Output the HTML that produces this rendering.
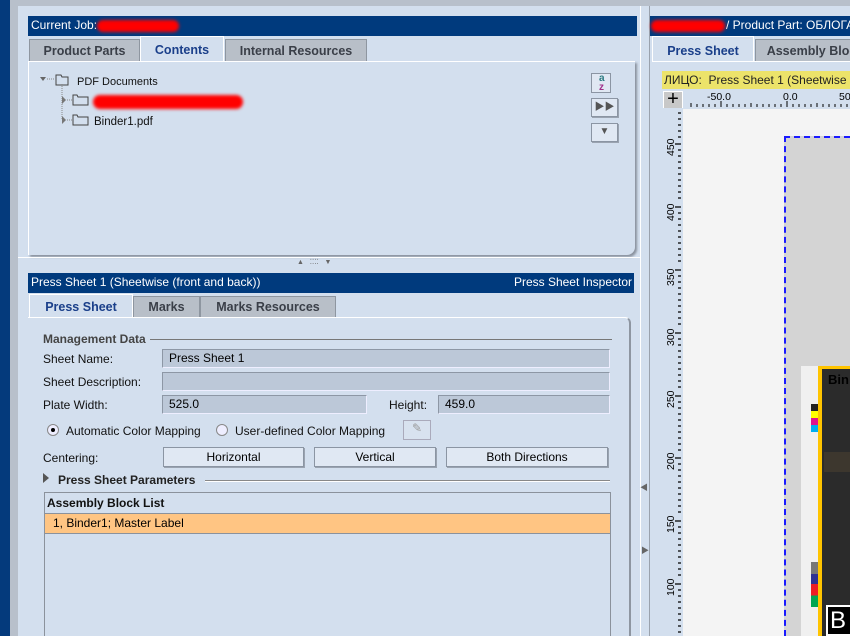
<!DOCTYPE html>
<html style="width:850px;height:636px;overflow:hidden"><head><meta charset="utf-8"><style>
*{margin:0;padding:0;box-sizing:border-box}
body{width:850px;height:636px;overflow:hidden;position:relative;background:#b8c0cb;font-family:"Liberation Sans","Noto Sans CJK SC",sans-serif;font-size:12px;color:#000}
.a{position:absolute}
.navy{background:#003a7d;color:#fff;font-size:12px;line-height:19px;padding-left:3px;white-space:nowrap;overflow:hidden}
.tab{position:absolute;height:23px;background:#b8bfc8;border:1px solid #8e96a0;border-bottom:none;font-weight:bold;color:#3a3f48;font-size:12.5px;text-align:center;line-height:22px}
.tab.on{background:#d3dfee;color:#1a3f8a;border-color:#fff}
.red{position:absolute;background:#f00;border-radius:8px;filter:blur(1.5px)}
.lbl{position:absolute;font-size:12px;color:#111}
.fld{position:absolute;height:19px;background:#bcc8d8;border:1px solid #8d97a5;border-right-color:#eef;border-bottom-color:#eef;padding-left:6px;line-height:17px;font-size:12px}
.btn{position:absolute;height:20px;background:#e0e8f3;border:1px solid #8b95a3;box-shadow:1px 1px 0 #9aa3b0;text-align:center;line-height:18px;font-size:12px}
</style></head><body>
<div class="a" style="left:0;top:0;width:10px;height:636px;background:#043a7c"></div>
<div class="a" style="left:18px;top:6px;width:622px;height:630px;background:#d3dfee"></div>
<div class="a" style="left:640px;top:6px;width:10px;height:630px;background:#d3dfee;border-left:1px solid #fff;border-right:1px solid #9aa2ad"></div>
<div class="a" style="left:650px;top:6px;width:200px;height:630px;background:#d3dfee"></div>

<div class="a navy" style="left:28px;top:16px;width:609px;height:20px">Current Job:</div>
<div class="red" style="left:97px;top:20px;width:82px;height:12px"></div>
<div class="tab" style="left:29px;top:39px;width:111px">Product Parts</div>
<div class="tab on" style="left:140px;top:36px;width:84px;height:26px;line-height:26px;border-bottom:none">Contents</div>
<div class="tab" style="left:225px;top:39px;width:142px">Internal Resources</div>
<div class="a" style="left:28px;top:61px;width:607px;height:194px;border-top:1px solid #fff;border-left:1px solid #fff;border-radius:0 0 8px 0;box-shadow:2px 2px 2px #8a929e"></div>
<svg class="a" style="left:38px;top:72px" width="120" height="60">
<path d="M2 5l6 0l-3 4z" fill="#666"/><path d="M9 7h8" stroke="#888" stroke-dasharray="1 1"/>
<path d="M18 3h5l1 2h6v8h-12z" fill="none" stroke="#444"/>
<path d="M24 12v36" stroke="#888" stroke-dasharray="1 1"/>
<path d="M24 24l4 4l-4 4z" fill="#777"/><path d="M29 28h5" stroke="#888" stroke-dasharray="1 1"/>
<path d="M35 23h4l1 2h10v8h-15z" fill="none" stroke="#444"/>
<path d="M24 44l4 4l-4 4z" fill="#777"/><path d="M29 48h5" stroke="#888" stroke-dasharray="1 1"/>
<path d="M35 43h4l1 2h10v8h-15z" fill="none" stroke="#444"/>
</svg>
<div class="lbl" style="left:77px;top:76px;font-size:11px">PDF Documents</div>
<div class="red" style="left:93px;top:95px;width:150px;height:14px"></div>
<div class="lbl" style="left:94px;top:116px;font-size:11.5px">Binder1.pdf</div>
<div class="a" style="left:591px;top:73px;width:20px;height:20px;background:#e0e8f3;border:1px solid #8b95a3;font-size:10px;font-weight:bold;color:#2a7a80;line-height:9px;padding-left:7px">a<br><span style="color:#a0308a">z</span></div>
<div class="btn" style="left:591px;top:98px;width:27px;height:19px;font-size:10px;color:#555">▶▶</div>
<div class="btn" style="left:591px;top:123px;width:27px;height:19px;font-size:10px;color:#555;line-height:16px">▼</div>
<div class="a" style="left:18px;top:257px;width:622px;border-top:1px solid #fff"></div>
<div class="a" style="left:297px;top:258px;font-size:7px;color:#666">▲ &nbsp; ⁚⁚⁚⁚ &nbsp; ▼</div>

<div class="a navy" style="left:28px;top:273px;width:606px;height:20px">Press Sheet 1 (Sheetwise (front and back))<span style="position:absolute;right:2px">Press Sheet Inspector</span></div>
<div class="tab on" style="left:29px;top:294px;width:104px;height:24px;line-height:25px">Press Sheet</div>
<div class="tab" style="left:133px;top:296px;width:67px;height:21px;line-height:20px">Marks</div>
<div class="tab" style="left:200px;top:296px;width:136px;height:21px;line-height:20px">Marks Resources</div>
<div class="a" style="left:28px;top:317px;width:603px;height:319px;border-top:1px solid #fff;border-right:2px solid #8e96a1;border-radius:0 6px 0 0"></div>
<div class="lbl" style="left:43px;top:332px;font-weight:bold;color:#444">Management Data</div>
<div class="a" style="left:150px;top:339px;width:462px;border-top:1px solid #777"></div>
<div class="lbl" style="left:43px;top:352px">Sheet Name:</div>
<div class="fld" style="left:162px;top:349px;width:448px">Press Sheet 1</div>
<div class="lbl" style="left:43px;top:375px">Sheet Description:</div>
<div class="fld" style="left:162px;top:372px;width:448px"></div>
<div class="lbl" style="left:43px;top:398px">Plate Width:</div>
<div class="fld" style="left:162px;top:395px;width:205px">525.0</div>
<div class="lbl" style="left:389px;top:398px">Height:</div>
<div class="fld" style="left:438px;top:395px;width:172px">459.0</div>
<div class="a" style="left:47px;top:424px;width:12px;height:12px;border-radius:50%;border:1px solid #888;background:#eef"><div class="a" style="left:3px;top:3px;width:4px;height:4px;border-radius:50%;background:#000"></div></div>
<div class="lbl" style="left:66px;top:424px">Automatic Color Mapping</div>
<div class="a" style="left:216px;top:424px;width:12px;height:12px;border-radius:50%;border:1px solid #888;background:#eef"></div>
<div class="lbl" style="left:235px;top:424px">User-defined Color Mapping</div>
<div class="a" style="left:403px;top:420px;width:28px;height:20px;border:1px solid #aab;background:#d8e2ef;color:#999;text-align:center;font-size:12px">✎</div>
<div class="lbl" style="left:43px;top:451px">Centering:</div>
<div class="btn" style="left:163px;top:447px;width:141px">Horizontal</div>
<div class="btn" style="left:314px;top:447px;width:122px">Vertical</div>
<div class="btn" style="left:446px;top:447px;width:162px">Both Directions</div>
<div class="a" style="left:43px;top:473px;width:0;height:0;border-left:6px solid #555;border-top:5px solid transparent;border-bottom:5px solid transparent"></div>
<div class="lbl" style="left:58px;top:473px;font-weight:bold;color:#222">Press Sheet Parameters</div>
<div class="a" style="left:205px;top:480px;width:405px;border-top:1px solid #888;border-bottom:1px solid #fff"></div>
<div class="a" style="left:44px;top:492px;width:567px;height:150px;border:1px solid #8b929c;background:#d3dfee"></div>
<div class="lbl" style="left:47px;top:496px;font-weight:bold">Assembly Block List</div>
<div class="a" style="left:45px;top:513px;width:565px;height:21px;background:#ffc583;border-top:1px solid #8b929c;border-bottom:1px solid #8b929c;line-height:19px;padding-left:8px">1, Binder1; Master Label</div>
<div class="a" style="left:640px;top:482px;font-size:8px;color:#666">◀</div>
<div class="a" style="left:641px;top:545px;font-size:8px;color:#666">▶</div>

<div class="a navy" style="left:650px;top:16px;width:200px;height:20px;padding-left:76px">/ Product Part: ОБЛОГА</div>
<div class="red" style="left:651px;top:20px;width:74px;height:12px"></div>
<div class="tab on" style="left:652px;top:36px;width:102px;height:26px;line-height:28px">Press Sheet</div>
<div class="tab" style="left:755px;top:39px;width:120px">Assembly Block</div>
<div class="a" style="left:652px;top:61px;width:198px;border-top:1px solid #fff"></div>
<div class="a" style="left:662px;top:71px;width:188px;height:18px;background:#ece36a;font-size:12px;line-height:18px;padding-left:2px;white-space:nowrap;overflow:hidden;color:#222">ЛИЦО:&nbsp; Press Sheet 1 (Sheetwise</div>
<div class="a" style="left:662px;top:89px;width:188px;height:20px;background:#d3dfee"></div>
<div class="a" style="left:663px;top:91px;width:20px;height:18px;background:#c8c8c8;border:1px solid #fff;font-size:20px;line-height:15px;text-align:center">+</div>
<svg class="a" style="left:683px;top:89px" width="167" height="20">
<text x="24" y="11" font-size="10.5" font-family="Liberation Sans">-50.0</text>
<text x="100" y="11" font-size="10.5" font-family="Liberation Sans">0.0</text>
<text x="156" y="11" font-size="10.5" font-family="Liberation Sans">50.</text>
<g stroke="#000">
<path d="M8 14v4M14 15v3M20 15v3M26 15v3M32 15v3M38 12v6M44 15v3M50 15v3M56 15v3M62 15v3M68 14v4M74 15v3M80 15v3M86 15v3M92 15v3M98 15v3M104 12v6M110 15v3M116 15v3M122 15v3M128 15v3M134 14v4M140 15v3M146 15v3M152 15v3M158 15v3M164 15v3"/>
</g></svg>
<div class="a" style="left:662px;top:108px;width:21px;height:528px;background:#d3dfee"></div>
<svg class="a" style="left:662px;top:108px" width="21" height="528">
<g font-size="10.5" font-family="Liberation Sans">
<text transform="translate(12,48) rotate(-90)">450</text>
<text transform="translate(12,113) rotate(-90)">400</text>
<text transform="translate(12,178) rotate(-90)">350</text>
<text transform="translate(12,238) rotate(-90)">300</text>
<text transform="translate(12,300) rotate(-90)">250</text>
<text transform="translate(12,362) rotate(-90)">200</text>
<text transform="translate(12,425) rotate(-90)">150</text>
<text transform="translate(12,488) rotate(-90)">100</text>
</g>
<g stroke="#000" stroke-width="1.2">
<path d="M16 5h3M16 11h3M16 17h3M16 23h3M16 29h3M13 36h6M16 42h3M16 48h3M16 54h3M16 60h3M16 66h3M16 72h3M16 78h3M16 84h3M16 90h3M13 99h6M16 105h3M16 111h3M16 117h3M16 123h3M16 129h3M16 135h3M16 141h3M16 147h3M16 153h3M13 162h6M16 168h3M16 174h3M16 180h3M16 186h3M16 192h3M16 198h3M16 204h3M16 210h3M16 216h3M13 225h6M16 231h3M16 237h3M16 243h3M16 249h3M16 255h3M16 261h3M16 267h3M16 273h3M16 279h3M13 288h6M16 294h3M16 300h3M16 306h3M16 312h3M16 318h3M16 324h3M16 330h3M16 336h3M16 342h3M13 350h6M16 356h3M16 362h3M16 368h3M16 374h3M16 380h3M16 386h3M16 392h3M16 398h3M16 404h3M13 413h6M16 419h3M16 425h3M16 431h3M16 437h3M16 443h3M16 449h3M16 455h3M16 461h3M16 467h3M13 476h6M16 482h3M16 488h3M16 494h3M16 500h3M16 506h3M16 512h3M16 518h3M16 524h3"/>
</g></svg>
<div class="a" style="left:683px;top:109px;width:167px;height:527px;background:#f4f4f4"></div>
<div class="a" style="left:784px;top:136px;width:66px;height:500px;background:#d4d4d4;border-left:2px dashed #1a1aff;border-top:2px dashed #1a1aff"></div>
<div class="a" style="left:801px;top:366px;width:18px;height:270px;background:#f0f0f0"></div>
<div class="a" style="left:811px;top:404px;width:7px;height:28px;background:linear-gradient(#222 0 25%,#ff0 25% 50%,#e0148c 50% 75%,#00aeef 75%)"></div>
<div class="a" style="left:811px;top:573px;width:7px;height:34px;background:linear-gradient(#2e3192 0 33%,#ed1c24 33% 66%,#00a651 66%)"></div>
<div class="a" style="left:811px;top:562px;width:7px;height:12px;background:#777"></div>
<div class="a" style="left:818px;top:366px;width:32px;height:270px;background:#ffc400"></div>
<div class="a" style="left:822px;top:369px;width:28px;height:267px;background:#2b2b2b"></div>
<div class="a" style="left:828px;top:372px;font-weight:bold;font-size:13px">Bin</div>
<div class="a" style="left:824px;top:452px;width:26px;height:20px;background:#4a4030;opacity:.6"></div>
<div class="a" style="left:826px;top:605px;width:24px;height:31px;border:2px solid #fff;border-right:none;background:#000;color:#fff;font-size:24px;line-height:28px;padding-left:2px">B</div>
</body></html>
